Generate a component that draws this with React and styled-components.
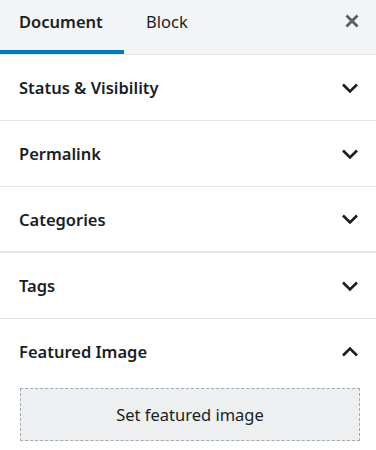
import styled, { createGlobalStyle } from 'styled-components';

const Global = createGlobalStyle`
  body {
    margin: 0;
    background: #fff;
    font-family: "Noto Sans", "Open Sans", sans-serif;
    color: #191e23;
  }
`;

const Sidebar = styled.div`
  width: 376px;
  background: #fff;
`;

const Header = styled.div`
  display: flex;
  align-items: stretch;
  height: 54px;
  background: #f3f4f5;
  border-bottom: 1px solid #e2e4e7;
`;

const Tab = styled.button`
  width: ${p => p.$width}px;
  border: 0;
  background: transparent;
  padding: 0 0 12px ${p => p.$pad}px;
  text-align: left;
  font-family: inherit;
  font-size: 16.5px;
  font-weight: ${p => (p.$active ? 600 : 400)};
  color: #191e23;
  box-shadow: ${p => (p.$active ? 'inset 0 -4px 0 #007cba' : 'none')};
  cursor: pointer;
`;

const Close = styled.button`
  margin-left: auto;
  width: 48px;
  border: 0;
  background: transparent;
  display: flex;
  align-items: center;
  justify-content: center;
  padding: 0 0 13px 0;
  color: #555d66;
`;

const Panel = styled.div`
  border-bottom: ${p => p.$thick ? 2 : 1}px solid #e2e4e7;
`;

const PanelTitle = styled.div`
  display: flex;
  align-items: center;
  justify-content: space-between;
  height: ${p => p.$h || 65}px;
  padding: 0 14px 0 19px;
  font-size: 16.5px;
  font-weight: 600;
`;

const PanelBody = styled.div`
  padding: 4px 16px 16px 20px;
`;

const SetImage = styled.button`
  display: block;
  width: 100%;
  height: 53px;
  border: 1px dashed #a2aab2;
  background: #edeff0;
  font-family: inherit;
  font-size: 16.5px;
  color: #191e23;
  cursor: pointer;
`;

const Chevron = ({ up }) => (
  <svg width="24" height="24" viewBox="0 0 24 24" fill="none">
    <polyline
      points={up ? '5,15.5 12,8.5 19,15.5' : '5,8.5 12,15.5 19,8.5'}
      stroke="#191e23"
      strokeWidth="2.6"
    />
  </svg>
);

const panels = ['Status & Visibility', 'Permalink', 'Categories', 'Tags'];

export default function App() {
  return (
    <Sidebar>
      <Global />
      <Header>
        <Tab $active $width={124} $pad={19}>Document</Tab>
        <Tab $width={80} $pad={22}>Block</Tab>
        <Close aria-label="Close">
          <svg width="14" height="14" viewBox="0 0 14 14">
            <path d="M1.5 1.5L12.5 12.5M12.5 1.5L1.5 12.5" stroke="currentColor" strokeWidth="2.8" />
          </svg>
        </Close>
      </Header>
      {panels.map((t, i) => (
        <Panel key={t} $thick={i === 2}>
          <PanelTitle $h={i === 2 ? 64 : 65}>
            {t}
            <Chevron />
          </PanelTitle>
        </Panel>
      ))}
      <Panel>
        <PanelTitle>
          Featured Image
          <Chevron up />
        </PanelTitle>
        <PanelBody>
          <SetImage>Set featured image</SetImage>
        </PanelBody>
      </Panel>
    </Sidebar>
  );
}
